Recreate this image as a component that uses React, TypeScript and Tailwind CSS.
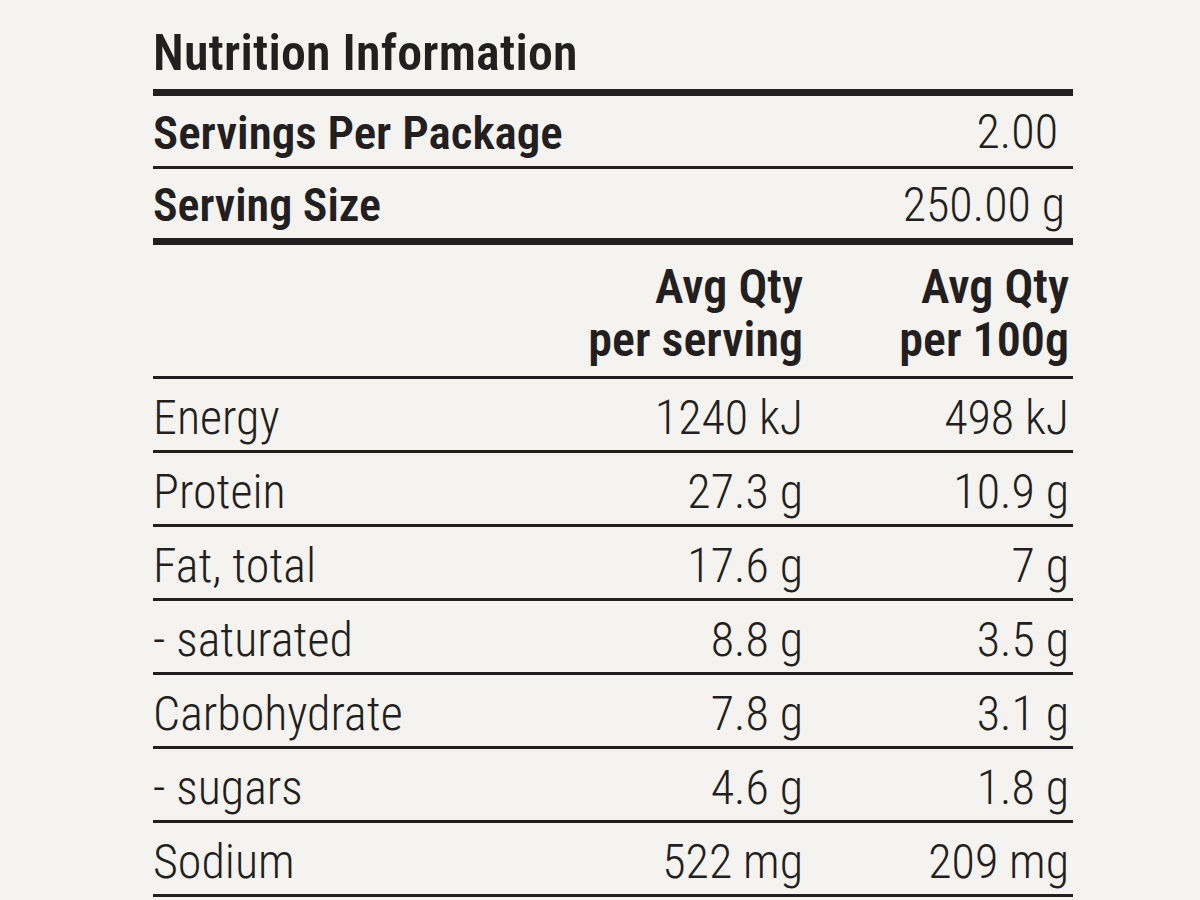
import React from "react";

const rows: [string, string, string][] = [
  ["Energy", "1240 kJ", "498 kJ"],
  ["Protein", "27.3 g", "10.9 g"],
  ["Fat, total", "17.6 g", "7 g"],
  ["- saturated", "8.8 g", "3.5 g"],
  ["Carbohydrate", "7.8 g", "3.1 g"],
  ["- sugars", "4.6 g", "1.8 g"],
  ["Sodium", "522 mg", "209 mg"],
];

export default function App() {
  return (
    <div className="bg-[#f4f3ef] min-h-[900px] w-full text-[#231f20] font-['Roboto',sans-serif] [font-stretch:75%]">
      <div className="ml-[153px] w-[920px]">
        <div className="h-[89px] pt-[28px]">
          <h1 className="text-[50px] leading-none font-semibold tracking-[0.2px]">Nutrition Information</h1>
        </div>
        <div className="border-t-[7px] border-[#231f20]">
          <div className="flex justify-between items-start h-[73px] pt-[12px] border-b-[3px] border-[#231f20]">
            <span className="text-[47px] leading-none font-semibold pt-[1px]">Servings Per Package</span>
            <span className="text-[48px] leading-none font-light pr-[15px]">2.00</span>
          </div>
          <div className="flex justify-between items-start h-[76px] pt-[12px] border-b-[7px] border-[#231f20]">
            <span className="text-[46px] leading-none font-semibold pt-[1px]">Serving Size</span>
            <span className="text-[48px] leading-none font-light pr-[8px]">250.00 g</span>
          </div>
          <div className="grid grid-cols-[400px_250px_270px] h-[134px] pt-[15px] border-b-[3px] border-[#231f20] text-[48px] leading-[53px] font-semibold">
            <div />
            <div className="text-right">
              Avg Qty
              <br />
              per serving
            </div>
            <div className="text-right pr-[4px]">
              Avg Qty
              <br />
              per 100g
            </div>
          </div>
          {rows.map(([label, a, b]) => (
            <div
              key={label}
              className="grid grid-cols-[400px_250px_270px] h-[74px] pt-[15px] border-b-[3px] border-[#231f20] text-[48px] leading-none font-light"
            >
              <div>{label}</div>
              <div className="text-right">{a}</div>
              <div className="text-right pr-[4px]">{b}</div>
            </div>
          ))}
        </div>
      </div>
    </div>
  );
}
